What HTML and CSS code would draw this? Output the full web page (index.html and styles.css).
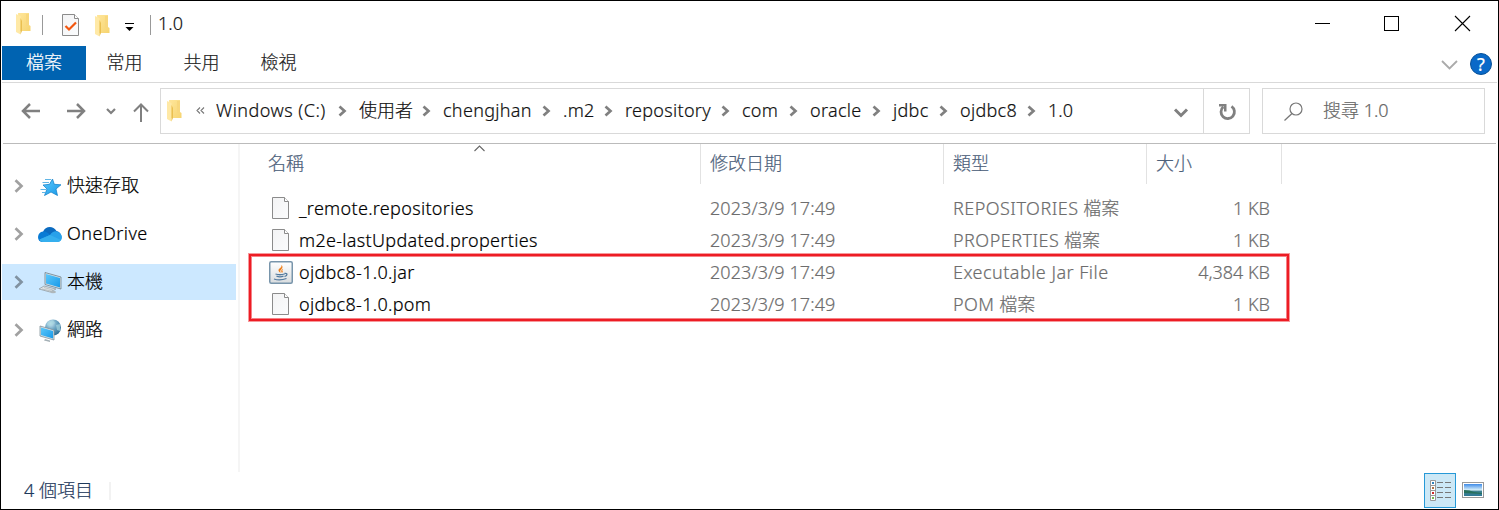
FILE: index.html
```html
<!DOCTYPE html>
<html lang="zh-Hant">
<head>
<meta charset="utf-8">
<title>1.0</title>
<link rel="stylesheet" href="styles.css">
</head>
<body>
<svg class="defs" width="0" height="0" aria-hidden="true">
  <defs>
    <linearGradient id="gold" x1="0" y1="0" x2="1" y2="1"><stop offset="0" stop-color="#ffe69b"/><stop offset="1" stop-color="#f6d470"/></linearGradient>
    <linearGradient id="page" x1="0" y1="0" x2="1" y2="1"><stop offset="0" stop-color="#f3f3f4"/><stop offset="1" stop-color="#fbfcfd"/></linearGradient>
    <linearGradient id="sky" x1="0" y1="0" x2="1" y2="1"><stop offset="0" stop-color="#5cc8fb"/><stop offset="1" stop-color="#1899e8"/></linearGradient>
    <linearGradient id="jar" x1="0" y1="0" x2="0" y2="1"><stop offset="0" stop-color="#fff"/><stop offset="1" stop-color="#d9dcde"/></linearGradient>
    <linearGradient id="photo" x1="0" y1="0" x2="0" y2="1"><stop offset="0" stop-color="#3f8be8"/><stop offset=".5" stop-color="#d8f0fa"/><stop offset=".6" stop-color="#3f8290"/><stop offset="1" stop-color="#2f7896"/></linearGradient>
    <radialGradient id="globe" cx=".35" cy=".25" r=".8"><stop offset="0" stop-color="#d2ebf5"/><stop offset=".45" stop-color="#72a9c6"/><stop offset="1" stop-color="#286b94"/></radialGradient>
    <symbol id="folder" viewBox="0 0 15 22"><path d="M2 0H13V12L14.500 13V18H3Z" fill="url(#gold)"/><path d="M10 1H13V13H10Z" fill="#f8d77d"/><path d="M0 1L4.500 3V21.500L0 19Z" fill="#ffe9a6"/><path d="M4.500 5V21.500L6 18V8Z" fill="#eabf50"/></symbol>
    <symbol id="file" viewBox="0 0 17 22"><path d="M.5.5H12.500L16.500 4.500V21.500H.5Z" fill="url(#page)" stroke="#8b8b8b"/><path d="M12.500.5V4.500H16.500" fill="#fff" stroke="#8b8b8b"/></symbol>
    <symbol id="chev" viewBox="0 0 9 12"><path d="M1.500 1.500L6.500 6L1.500 10.500" fill="none" stroke="#808080" stroke-width="2.700"/></symbol>
    <symbol id="tree" viewBox="0 0 10 14"><path d="M1.500 1.200L7.500 7L1.500 12.800" fill="none" stroke="#000" stroke-opacity=".37" stroke-width="2.700"/></symbol>
  </defs>
</svg>
<div class="window">
  <header class="titlebar">
    <svg class="t-folder" width="15" height="22"><use href="#folder"/></svg>
    <i class="bar bar-a"></i>
    <svg class="t-props" width="17" height="22"><use href="#file"/><path d="M3.500 12L7 15.500L14 8.500" fill="none" stroke="#f2560f" stroke-width="2.200"/></svg>
    <svg class="t-folder2" width="15" height="22"><use href="#folder"/></svg>
    <svg class="t-more" width="9" height="8"><path d="M0 .5H9" stroke="#000"/><path d="M.5 4H8.500L4.500 8Z"/></svg>
    <i class="bar bar-b"></i>
    <span class="title">1.0</span>
    <div class="controls">
      <svg width="15" height="15"><path d="M0 7.500H15" stroke="#000"/></svg>
      <svg width="15" height="15"><rect x=".5" y=".5" width="14" height="14" fill="none" stroke="#000"/></svg>
      <svg width="15" height="15"><path d="M0 0L15 15M15 0L0 15" stroke="#000" stroke-width="1.100"/></svg>
    </div>
  </header>
  <nav class="ribbon">
    <span class="tab active">檔案</span>
    <span class="tab">常用</span>
    <span class="tab">共用</span>
    <span class="tab">檢視</span>
    <svg class="expand" width="17" height="11"><path d="M1 1L8.500 8.500L16 1" fill="none" stroke="#aaa" stroke-width="1.800"/></svg>
    <span class="help">?</span>
  </nav>
  <div class="navbar">
    <svg class="back" width="19" height="16"><path d="M19 8H2M9 1L2 8L9 15" fill="none" stroke="#808080" stroke-width="2.500"/></svg>
    <svg class="forward" width="19" height="16"><path d="M0 8H17M10 1L17 8L10 15" fill="none" stroke="#808080" stroke-width="2.500"/></svg>
    <svg class="recent" width="10" height="7"><path d="M1 1L5 5L9 1" fill="none" stroke="#808080" stroke-width="2.200"/></svg>
    <svg class="up" width="16" height="19"><path d="M8 19V2M1 8.500L8 1.500L15 8.500" fill="none" stroke="#808080" stroke-width="2"/></svg>
    <div class="address">
      <svg class="a-folder" width="15" height="22"><use href="#folder"/></svg>
      <svg class="overflow" width="9" height="7"><path d="M4 .5L1 3.500L4 6.500M8 .5L5 3.500L8 6.500" fill="none" stroke="#777" stroke-width="1.100"/></svg>
      <div class="crumbs">
        <span class="crumb"><b class="wide">Windows (C:)</b><svg width="9" height="12"><use href="#chev"/></svg></span>
        <span class="crumb"><b>使用者</b><svg width="9" height="12"><use href="#chev"/></svg></span>
        <span class="crumb"><b class="latin">chengjhan</b><svg width="9" height="12"><use href="#chev"/></svg></span>
        <span class="crumb"><b class="latin">.m2</b><svg width="9" height="12"><use href="#chev"/></svg></span>
        <span class="crumb"><b class="latin">repository</b><svg width="9" height="12"><use href="#chev"/></svg></span>
        <span class="crumb"><b class="latin">com</b><svg width="9" height="12"><use href="#chev"/></svg></span>
        <span class="crumb"><b class="latin">oracle</b><svg width="9" height="12"><use href="#chev"/></svg></span>
        <span class="crumb"><b class="latin">jdbc</b><svg width="9" height="12"><use href="#chev"/></svg></span>
        <span class="crumb"><b class="latin">ojdbc8</b><svg width="9" height="12"><use href="#chev"/></svg></span>
        <span class="crumb"><b>1.0</b></span>
      </div>
      <svg class="drop" width="14" height="10"><path d="M1 1.500L7 7.500L13 1.500" fill="none" stroke="#808080" stroke-width="3"/></svg>
      <div class="refresh"><svg width="17" height="17"><path d="M12.500 2.300A6.700 6.700 0 1 1 4.300 2.800" fill="none" stroke="#808080" stroke-width="2.800"/><path d="M0 0H7.500V7.500H5V2.500H0Z" fill="#808080"/></svg></div>
    </div>
    <div class="search">
      <svg width="19" height="19"><circle cx="12" cy="7" r="6" fill="none" stroke="#777" stroke-width="1.200"/><path d="M8 11.500L.5 18.500" stroke="#777" stroke-width="1.300"/></svg>
      <span>搜尋 1.0</span>
    </div>
  </div>
  <main class="body">
    <aside class="sidebar">
      <div class="node"><svg width="10" height="14"><use href="#tree"/></svg>
        <svg class="node-icon" width="24" height="20" viewBox="0 0 24 20"><path d="M14.500 2L16.300 7.300L23 7.800L18 12L19.500 18.500L13 15L6.500 18.500L9 12L5 8L11.500 7.300Z" fill="url(#sky)" stroke="#0b7bc5" stroke-width=".7"/><path d="M7 2.500H13M4.500 5.500H11M2.500 12.500H8M4 15.500H7" stroke="#60b5e5" stroke-width="1"/></svg>
        <span>快速存取</span></div>
      <div class="node"><svg width="10" height="14"><use href="#tree"/></svg>
        <svg class="node-icon" width="24" height="17" viewBox="0 0 24 17"><path d="M5 6C7 0 15-1 18.500 5Q23 6 23.500 11L12 14L2 13Q-1 9 5 6Z" fill="#0b6bc0"/><path d="M5 5.500Q9 5 12 9L5 16Q0 16 0 11Q.5 6 5 5.500Z" fill="#087bd5"/><path d="M12 9Q15 4.500 19 5.500Q24 7 24 12Q23 16 19 16H5Q2 15 1.500 13.500Z" fill="#28a1ea"/><path d="M12 9L23 14Q22 16 19 16H5Q2 15 1.500 13.500Z" fill="#35afee"/></svg>
        <span class="wide">OneDrive</span></div>
      <div class="node selected"><svg width="10" height="14"><use href="#tree"/></svg>
        <svg class="node-icon" width="24" height="22" viewBox="0 0 24 22"><path d="M7 .5L23 5V17L7 12.500Z" fill="#d5e1e7" stroke="#70808a" stroke-width=".8"/><path d="M8 2L22 6V15.500L8 11.500Z" fill="url(#sky)"/><path d="M1 17L6 14L18 17L12 20Z" fill="#dfe4e6" stroke="#929da3" stroke-width=".8"/><path d="M4 17L13 19M6 15.500L15 18" stroke="#a2abaf" stroke-width=".6"/><ellipse cx="15" cy="20" rx="3" ry="1.200" fill="#aeb7bb"/></svg>
        <span>本機</span></div>
      <div class="node"><svg width="10" height="14"><use href="#tree"/></svg>
        <svg class="node-icon" width="24" height="23" viewBox="0 0 24 23"><circle cx="15" cy="8.500" r="8" fill="url(#globe)"/><path d="M10 3L15 1L17 4L13 7L9 6ZM18 6L22 5L22 12L19 11Z" fill="#a7d5df" opacity=".7"/><path d="M2 7L16 11V21L2 17Z" fill="#d5e1e7" stroke="#82929b" stroke-width=".8"/><path d="M3 8.500L15 12V19.500L3 16Z" fill="url(#sky)"/><path d="M7 20L12 21.500V23L6 21.500Z" fill="#a4b0b6"/></svg>
        <span>網路</span></div>
    </aside>
    <section class="files">
      <div class="row head">
        <span class="h-name">名稱</span><span>修改日期</span><span>類型</span><span>大小</span>
        <svg class="sort" width="11" height="7"><path d="M.5 6L5.500 1L10.500 6" fill="none" stroke="#666" stroke-width="1.100"/></svg>
      </div>
      <div class="row"><div class="name"><svg width="17" height="22"><use href="#file"/></svg><span>_remote.repositories</span></div><span class="date">2023/3/9 17:49</span><span class="type"><b class="wide">REPOSITORIES</b> 檔案</span><span class="size">1 KB</span></div>
      <div class="row"><div class="name"><svg width="17" height="22"><use href="#file"/></svg><span>m2e-lastUpdated.properties</span></div><span class="date">2023/3/9 17:49</span><span class="type"><b class="wide">PROPERTIES</b> 檔案</span><span class="size">1 KB</span></div>
      <div class="row"><div class="name jar"><svg width="24" height="23"><rect x=".75" y=".75" width="22.500" height="21.500" rx="1.500" fill="url(#jar)" stroke="#7895ab" stroke-width="1.500"/><path d="M12.500 4Q13 6 10.500 7.500Q8 9.500 11.500 12Q10.500 9.500 12.500 8Q14.500 6 12.500 4M14 7.500Q11 9.500 13 12Q14.500 10.500 13.300 9.500Z" fill="#ee7e18"/><path d="M6.500 13Q11 14.500 15.500 13M7.500 15.200Q11 16.500 14.500 15.200M15.500 12.500Q19 12 17.500 14.500L15.500 15.500M5 18Q11 20 17.500 17.500" fill="none" stroke="#527a9e" stroke-width="1.300"/></svg><span>ojdbc8-1.0.jar</span></div><span class="date">2023/3/9 17:49</span><span class="type"><b class="wide">Executable Jar File</b></span><span class="size">4,384 KB</span></div>
      <div class="row"><div class="name"><svg width="17" height="22"><use href="#file"/></svg><span>ojdbc8-1.0.pom</span></div><span class="date">2023/3/9 17:49</span><span class="type"><b class="wide">POM</b> 檔案</span><span class="size">1 KB</span></div>
      <div class="highlight"></div>
    </section>
  </main>
  <footer class="status">
    <span class="count">4 個項目</span>
    <div class="views">
      <span class="details"><svg width="22" height="22"><g fill="#fff" stroke="#999"><path d="M.5.5H5.500V20.500H.5Z"/><path d="M0 5.500H6M0 10.500H6M0 15.500H6"/></g><path d="M2 3H4" stroke="#2e82bd" stroke-width="2"/><path d="M2 8H4" stroke="#b17243" stroke-width="2"/><path d="M2 13H4" stroke="#cf2929" stroke-width="2"/><path d="M2 18H4" stroke="#74b751" stroke-width="2"/><path d="M7 2.500H13M15 2.500H21M7 7.500H13M15 7.500H21M7 12.500H13M15 12.500H21M7 17.500H13M15 17.500H21" stroke="#777"/></svg></span>
      <svg width="22" height="16"><rect x=".5" y=".5" width="21" height="15" fill="#fff" stroke="#999"/><rect x="2" y="2" width="18" height="12" fill="url(#photo)"/><path d="M2 8Q8 8 12 10L20 11V12L2 11Z" fill="#28705c"/></svg>
    </div>
  </footer>
</div>
</body>
</html>
```
FILE: styles.css
```css
* { box-sizing: border-box; }
body {
  margin: 0;
  background: #fff;
  color: #111;
  font: 300 18px/24px "Noto Sans", "Noto Sans CJK TC", sans-serif;
  -webkit-text-stroke: .2px;
}
b { font-weight: inherit; }
svg { display: block; flex: none; overflow: visible; }
.latin { letter-spacing: .3px; }
.wide { letter-spacing: .47px; }
.defs { position: absolute; }
.window { width: 1499px; height: 510px; border: 1px solid #000; display: flex; flex-direction: column; overflow: hidden; white-space: nowrap; }

.titlebar { height: 45px; display: flex; align-items: flex-start; padding: 12px 28px 0 15px; }
.bar { width: 1px; height: 20px; background: #999; margin-top: 2px; flex: none; }
.bar-a { margin-left: 11px; }
.t-props { margin: 1px 0 0 19px; }
.t-folder2 { margin: 2px 0 0 16px; }
.t-more { margin: 10px 0 0 15px; }
.bar-b { margin-left: 16px; }
.title { margin-left: 7px; margin-top: -2px; }
.controls { margin: 3px 0 0 auto; display: flex; gap: 54px; }
.controls svg:nth-child(2) { margin-right: 2px; }

.ribbon { height: 37px; margin: 0 1px; display: flex; border-bottom: 1px solid #d9d9d9; color: #222; }
.tab { width: 77px; padding-top: 4px; text-align: center; }
.tab.active { width: 84px; height: 34px; background: #0063b1; color: #fff; }
.expand { margin: 14px 0 0 auto; }
.help { width: 22px; height: 22px; margin: 7px 5px 0 12px; border-radius: 50%; background: #0969c8; border: 1px solid #075199; color: #fff; text-align: center; line-height: 20px; font-weight: 400; }

.navbar { height: 61px; margin: 0 2px; border-bottom: 1px solid #bbb; display: flex; align-items: flex-start; }
.back { margin: 20px 0 0 18px; }
.forward { margin: 20px 0 0 27px; }
.recent { margin: 25px 0 0 20px; }
.up { margin: 20px 0 0 17px; }
.address { width: 1090px; height: 46px; margin: 5px 0 0 11px; border: 1px solid #d9d9d9; display: flex; }
.a-folder { margin: 11px 0 0 6px; }
.overflow { margin: 18px 0 0 14px; }
.crumbs { display: grid; grid-template-columns: 143px 84px 120px 62px 117px 68px 83px 67px 88px 40px; margin-left: 11px; }
.crumb { display: flex; justify-content: space-between; padding: 9px 12px 0 0; }
.crumb svg { margin-top: 7px; }
.drop { margin: 19px 0 0 auto; }
.refresh { width: 46px; border-left: 1px solid #d9d9d9; margin-left: 15px; padding: 15px 0 0 15px; }
.search { width: 223px; height: 46px; margin: 5px 0 0 12px; border: 1px solid #d9d9d9; display: flex; padding: 13px 0 0 21px; color: #666; }
.search span { margin: -4px 0 0 20px; }

.body { height: 328px; display: flex; }
.sidebar { width: 239px; padding: 24px 2px 0 1px; border-right: 2px solid #f5f5f5; }
.node { height: 36px; margin-bottom: 12px; padding-left: 12px; display: flex; align-items: center; color: #000; }
.node.selected { background: #cce8ff; }
.node-icon { margin: 1px 5px 0 14px; }
.node span { margin-top: -2px; }

.files { position: relative; width: 1042px; }
.row { height: 32px; display: grid; grid-template-columns: 461px 243px 203px 135px; align-items: center; color: #6d6d6d; }
.head { position: relative; height: 40px; margin-bottom: 8px; color: #4c607a; }
.head > span { height: 40px; padding: 7px 0 0 9px; border-right: 1px solid #e2e2e2; }
.head > .h-name { padding-left: 28px; }
.sort { position: absolute; left: 234px; top: 1px; }
.name { display: flex; align-items: center; padding-left: 32px; color: #000; }
.name span { margin-left: 10px; letter-spacing: .31px; }
.name.jar { padding-left: 29px; }
.name.jar span { margin-left: 6px; }
.date, .type { padding-left: 9px; }
.date { letter-spacing: .07px; }
.size { text-align: right; padding-right: 12px; }
.highlight { position: absolute; left: 9px; top: 110px; width: 1040px; height: 67px; border: 2px solid #ed1c24; box-shadow: 0 0 0 1px rgba(237,28,36,.45), inset 0 0 0 1px rgba(237,28,36,.55); }

.status { height: 36px; display: flex; justify-content: space-between; }
.count { width: 110px; height: 18px; margin: 10px 0 0; padding-left: 23px; border-right: 2px solid #f2f2f2; line-height: 16px; color: #1e395b; }
.views { display: flex; padding: 1px 14px 0 0; gap: 6px; }
.details { width: 32px; height: 35px; border: 1px solid #2699d7; background: #cce8f6; padding: 6px 0 0 5px; }
.views > svg { margin-top: 9px; }
```
